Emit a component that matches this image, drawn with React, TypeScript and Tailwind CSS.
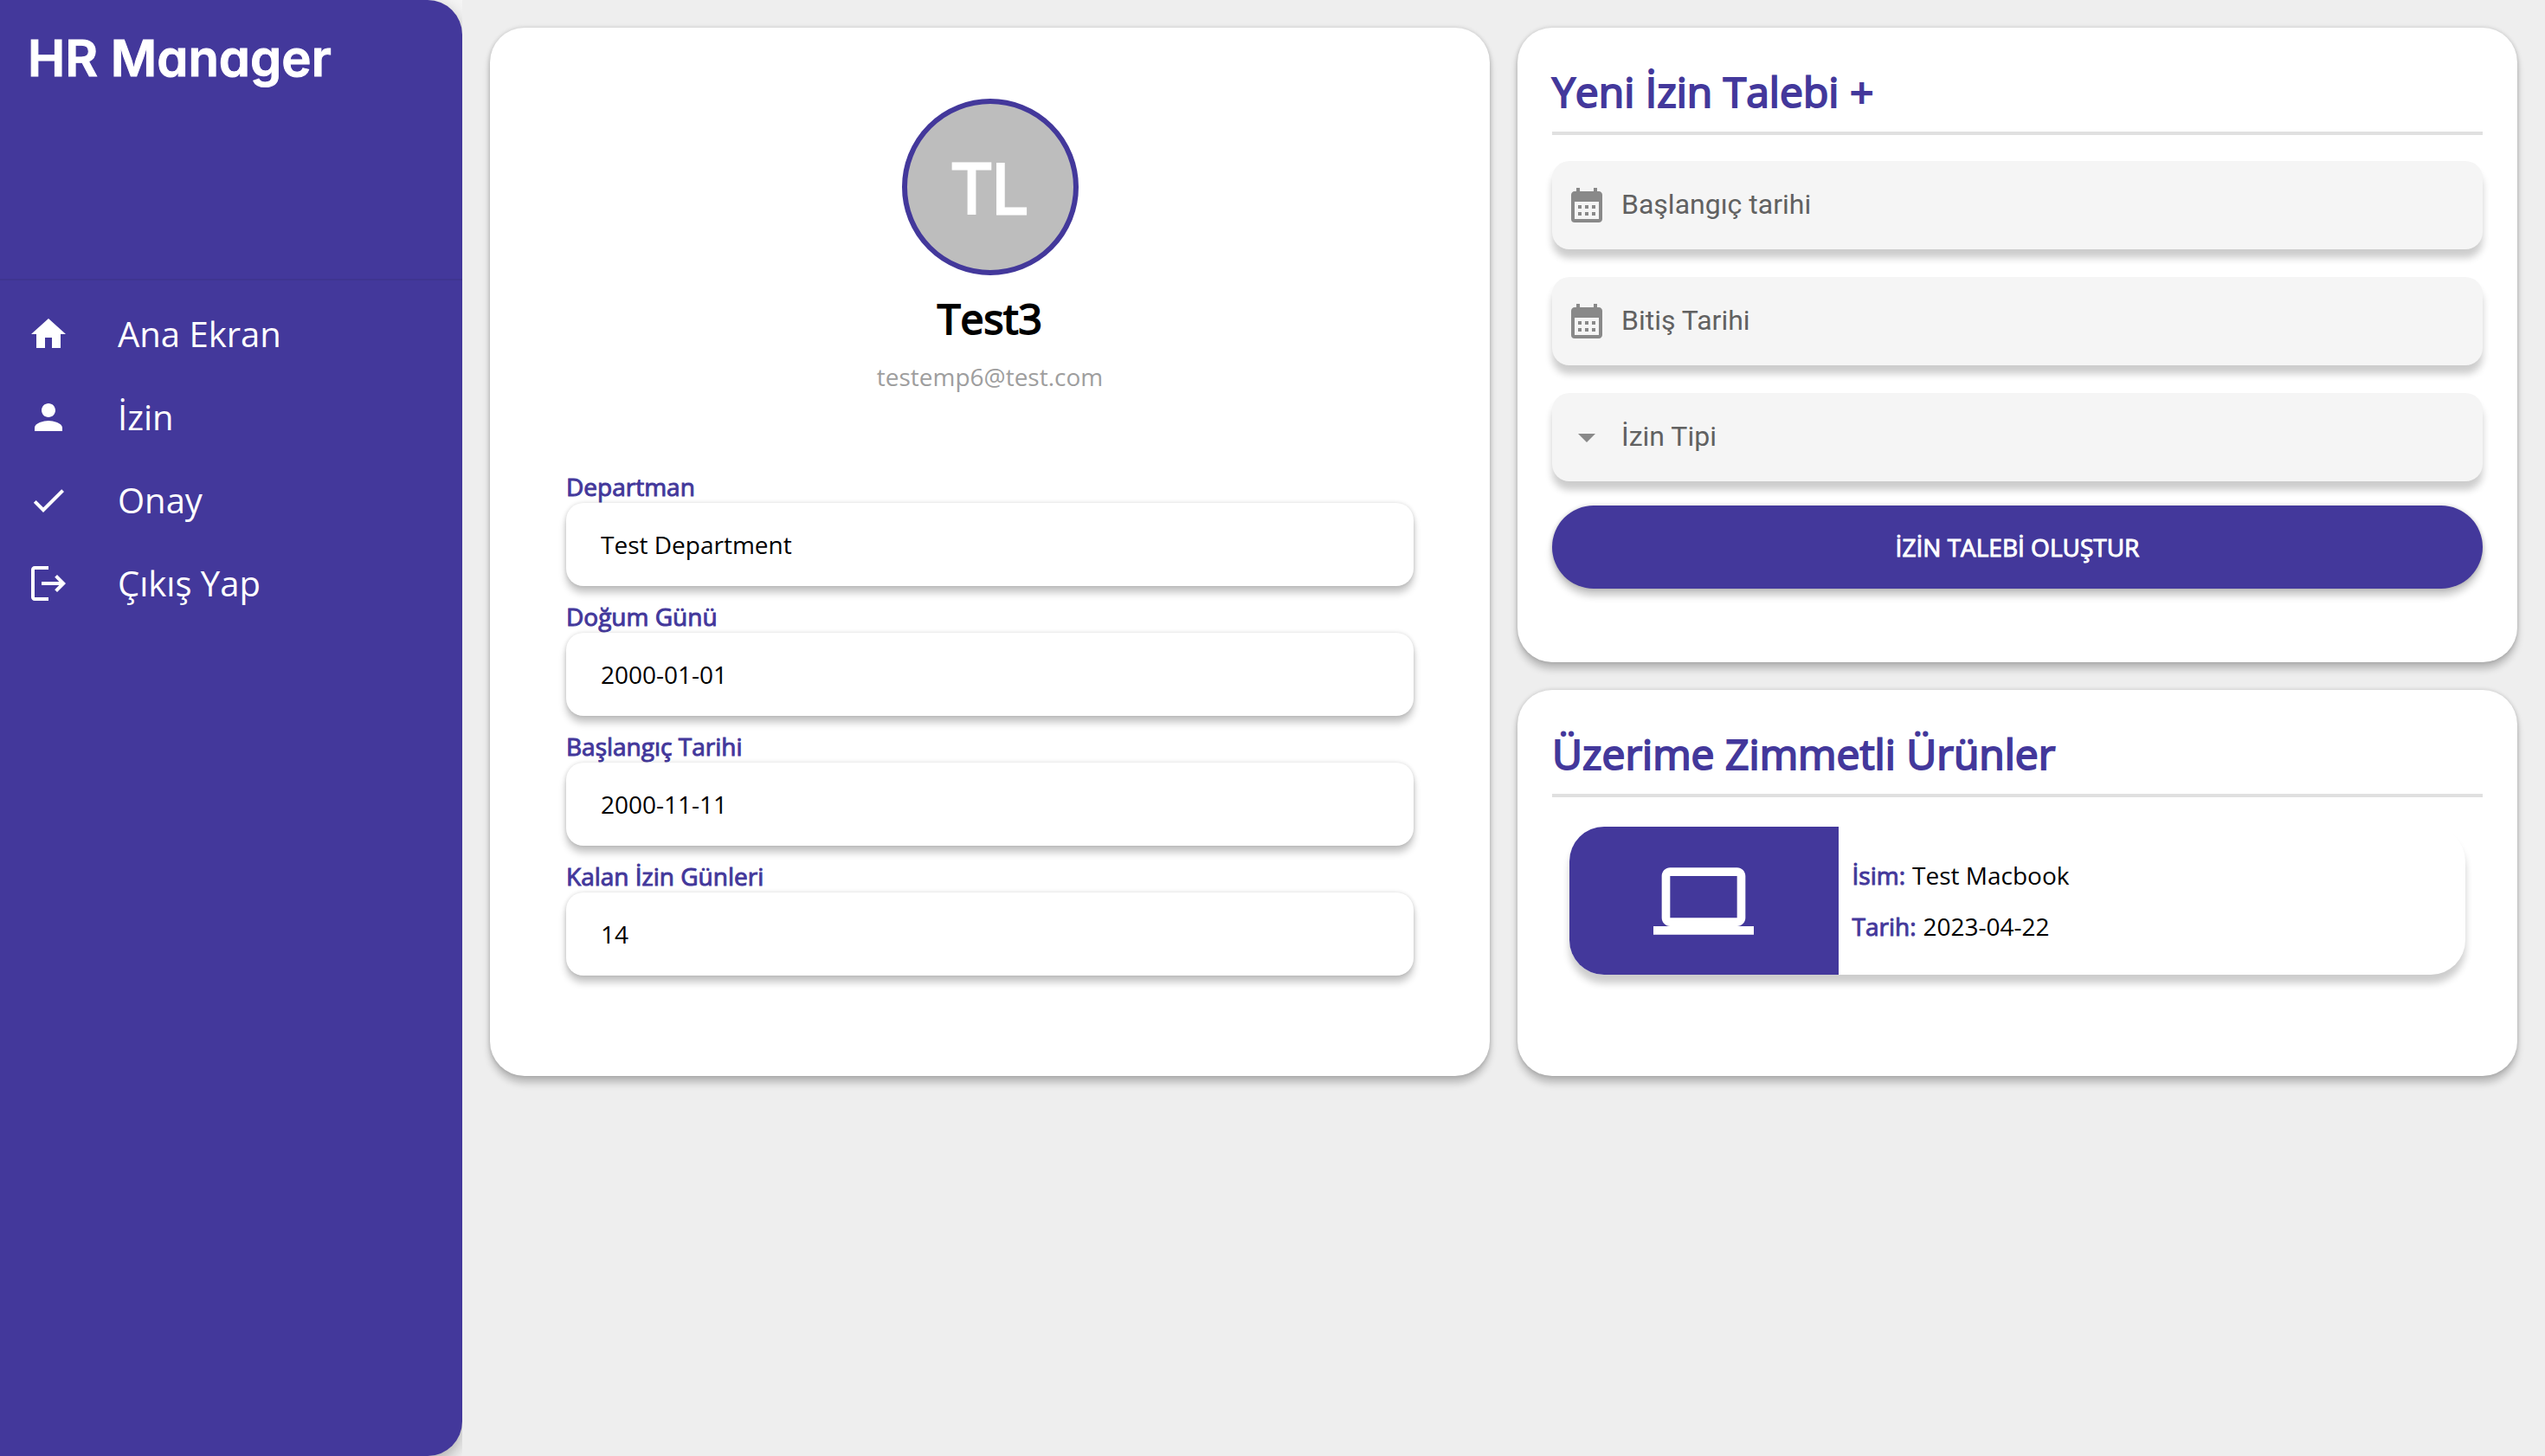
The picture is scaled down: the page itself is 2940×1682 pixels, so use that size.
import type { ReactNode } from "react";
import { MdHome, MdPerson, MdCheck, MdCalendarMonth, MdArrowDropDown, MdLaptop } from "react-icons/md";

function LogoutIcon() {
  return (
    <svg viewBox="0 0 24 24" className="size-12" fill="currentColor" aria-hidden="true">
      <path d="M17 7l-1.410 1.410L18.170 11H8v2h10.170l-2.580 2.580L17 17l5-5-5-5z" />
      <path d="M4 4h8V2H4c-1.100 0-2 .9-2 2v16c0 1.100.9 2 2 2h8v-2H4V4z" />
    </svg>
  );
}

const navItems = [
  { label: "Ana Ekran", icon: <MdHome className="size-12" /> },
  { label: "İzin", icon: <MdPerson className="size-12" /> },
  { label: "Onay", icon: <MdCheck className="size-12" /> },
  { label: "Çıkış Yap", icon: <LogoutIcon /> },
];

const profileFields = [
  { id: "departman", label: "Departman", value: "Test Department" },
  { id: "dogum", label: "Doğum Günü", value: "2000-01-01" },
  { id: "baslangic", label: "Başlangıç Tarihi", value: "2000-11-11" },
  { id: "kalan", label: "Kalan İzin Günleri", value: "14" },
];

function Card({ className = "", children }: { className?: string; children: ReactNode }) {
  return (
    <section
      className={`rounded-[40px] bg-white shadow-[0_8px_8px_rgba(0,0,0,0.22),0_0_5px_rgba(0,0,0,0.18)] ${className}`}
    >
      {children}
    </section>
  );
}

function CardTitle({ children }: { children: ReactNode }) {
  return (
    <h2 className="border-b-4 border-[#e0e0e0] pb-3 text-[48px] leading-[68px] text-[#43389b] [-webkit-text-stroke:2px_#43389b]">
      {children}
    </h2>
  );
}

function DateField({ label }: { label: string }) {
  return (
    <label className="flex h-[102px] items-center gap-4 rounded-[20px] bg-[#f5f5f5] px-4 shadow-[0_10px_8px_rgba(0,0,0,0.2)]">
      <MdCalendarMonth className="size-12 shrink-0 text-[#898989]" />
      <input
        type="text"
        aria-label={label}
        placeholder={label}
        className="w-full min-w-0 bg-transparent pb-0.5 font-['Roboto',sans-serif] text-[32px] leading-10 text-[#616161] outline-none placeholder:text-[#616161]"
      />
    </label>
  );
}

export default function App() {
  return (
    <div className="flex min-h-screen bg-[#eeeeee] font-['Open_Sans',sans-serif] text-black">
      <aside className="w-[534px] shrink-0 overflow-hidden bg-[#f5f5f5]">
        <div className="h-full rounded-r-[40px] bg-[#43389b] text-white shadow-[0_8px_20px_rgba(0,0,0,0.3)]">
          <div className="h-[324px] border-b-2 border-[#3f3590] px-8 pt-8">
            <h1 className="font-['Inter',sans-serif] text-[58px] leading-[70px] font-semibold [-webkit-text-stroke:1px_white] [font-feature-settings:'cv11']">
              HR Manager
            </h1>
          </div>
          <nav className="flex flex-col pt-[14px]">
            {navItems.map((item) => (
              <a key={item.label} href="#" className="flex h-24 items-center gap-14 px-8 text-[40px] leading-[54px]">
                {item.icon}
                {item.label}
              </a>
            ))}
          </nav>
        </div>
      </aside>

      <main className="grid flex-1 grid-cols-2 items-stretch gap-8 self-start p-8">
        <Card className="flex flex-col px-[88px] pt-[82px] pb-[116px]">
          <div className="flex flex-col items-center">
            <div className="flex size-[204px] items-center justify-center rounded-full border-6 border-[#43389b] bg-[#bdbdbd] text-[80px] text-white [-webkit-text-stroke:3px_white]">
              TL
            </div>
            <h2 className="mt-4 text-[48px] leading-[68px] [-webkit-text-stroke:2px_black]">Test3</h2>
            <p className="mt-[14px] text-[28px] leading-[38px] text-[#9e9e9e]">testemp6@test.com</p>
          </div>
          <div className="mt-[89px] flex flex-col gap-4">
            {profileFields.map((field) => (
              <div key={field.id} className="flex flex-col">
                <label
                  htmlFor={field.id}
                  className="text-[28px] leading-[38px] text-[#43389b] [-webkit-text-stroke:1px_#43389b]"
                >
                  {field.label}
                </label>
                <input
                  id={field.id}
                  readOnly
                  value={field.value}
                  className="h-24 w-full rounded-[20px] bg-white px-10 text-[28px] shadow-[0_8px_8px_rgba(0,0,0,0.22),0_0_5px_rgba(0,0,0,0.15)] outline-none"
                />
              </div>
            ))}
          </div>
        </Card>

        <div className="flex flex-col gap-8">
          <Card className="px-10 pt-10 pb-[85px]">
            <CardTitle>Yeni İzin Talebi +</CardTitle>
            <form className="mt-[30px] flex flex-col">
              <div className="flex flex-col gap-8">
                <DateField label="Başlangıç tarihi" />
                <DateField label="Bitiş Tarihi" />
                <label className="flex h-[102px] items-center gap-4 rounded-[20px] bg-[#f5f5f5] px-4 shadow-[0_10px_8px_rgba(0,0,0,0.2)]">
                  <MdArrowDropDown className="size-12 shrink-0 text-[#898989]" />
                  <select
                    aria-label="İzin Tipi"
                    className="w-full min-w-0 appearance-none bg-transparent pb-0.5 font-['Roboto',sans-serif] text-[32px] leading-10 text-[#616161] outline-none"
                  >
                    <option>İzin Tipi</option>
                  </select>
                </label>
              </div>
              <button
                type="button"
                className="mt-7 h-24 rounded-full bg-[#43389b] text-[28px] text-white shadow-[0_8px_8px_rgba(0,0,0,0.22),0_0_5px_rgba(0,0,0,0.18)] [-webkit-text-stroke:1px_white]"
              >
                İZİN TALEBİ OLUŞTUR
              </button>
            </form>
          </Card>

          <Card className="flex-1 px-10 pt-10">
            <CardTitle>Üzerime Zimmetli Ürünler</CardTitle>
            <div className="mx-5 mt-[34px] flex h-[171px] rounded-[40px] bg-white shadow-[0_10px_8px_rgba(0,0,0,0.2)]">
              <div className="flex w-[30%] items-center justify-center rounded-l-[40px] bg-[#43389b] text-white">
                <MdLaptop className="size-[116px]" />
              </div>
              <dl className="flex flex-col justify-center px-4 text-[28px] leading-[59px]">
                <div className="flex gap-2">
                  <dt className="text-[#43389b] [-webkit-text-stroke:1px_#43389b]">İsim:</dt>
                  <dd>Test Macbook</dd>
                </div>
                <div className="flex gap-2">
                  <dt className="text-[#43389b] [-webkit-text-stroke:1px_#43389b]">Tarih:</dt>
                  <dd>2023-04-22</dd>
                </div>
              </dl>
            </div>
          </Card>
        </div>
      </main>
    </div>
  );
}
